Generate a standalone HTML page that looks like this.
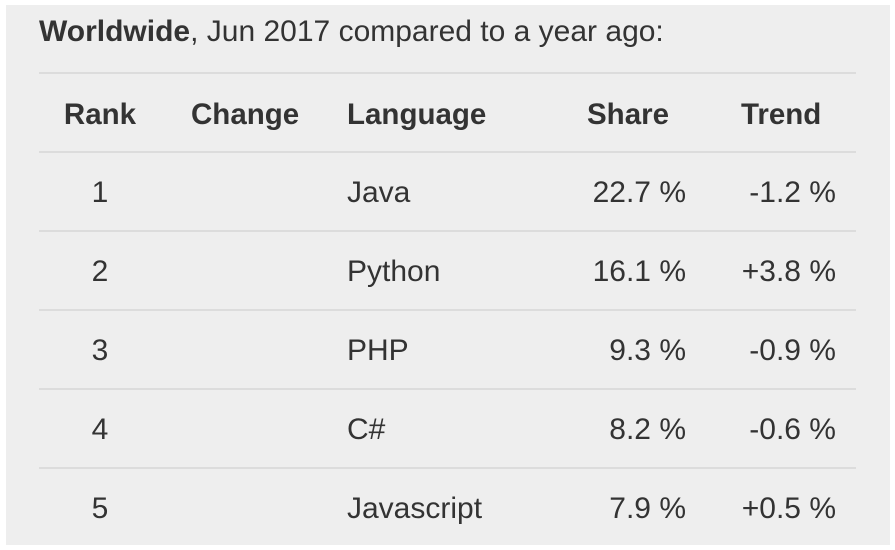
<!DOCTYPE html>
<html><head><style>
body{margin:0;width:895px;height:550px;background:#fff;position:relative;overflow:hidden;font-family:"Liberation Sans",Arial,sans-serif;color:#333}
.p{position:absolute;left:6px;top:5px;width:884px;height:540px;background:#eee}
.t{position:absolute;font-size:30px;line-height:30px;white-space:nowrap}
.h{font-weight:bold;font-size:29.5px}
.l{position:absolute;left:39px;width:817px;height:2px;background:#dcdcdc}
.c{text-align:center;width:100px;margin-left:-50px}
.r{text-align:right;width:200px;margin-left:-200px}
</style></head><body><div class="p"></div>
<div class="t" style="left:39px;top:17px"><b>Worldwide</b>, Jun 2017 compared to a year ago:</div>
<div class="l" style="top:72px"></div>
<div class="l" style="top:151px"></div>
<div class="l" style="top:230px"></div>
<div class="l" style="top:309px"></div>
<div class="l" style="top:388px"></div>
<div class="l" style="top:467px"></div>
<div class="t h c" style="left:100px;top:100px">Rank</div>
<div class="t h" style="left:191px;top:100px">Change</div>
<div class="t h" style="left:347px;top:100px">Language</div>
<div class="t h" style="left:587px;top:100px">Share</div>
<div class="t h" style="left:741px;top:100px">Trend</div>

<div class="t c" style="left:100px;top:178px">1</div><div class="t" style="left:347px;top:178px">Java</div><div class="t r" style="left:686px;top:178px">22.7 %</div><div class="t r" style="left:836px;top:178px">-1.2 %</div>
<div class="t c" style="left:100px;top:257px">2</div><div class="t" style="left:347px;top:257px">Python</div><div class="t r" style="left:686px;top:257px">16.1 %</div><div class="t r" style="left:836px;top:257px">+3.8 %</div>
<div class="t c" style="left:100px;top:336px">3</div><div class="t" style="left:347px;top:336px">PHP</div><div class="t r" style="left:686px;top:336px">9.3 %</div><div class="t r" style="left:836px;top:336px">-0.9 %</div>
<div class="t c" style="left:100px;top:415px">4</div><div class="t" style="left:347px;top:415px">C#</div><div class="t r" style="left:686px;top:415px">8.2 %</div><div class="t r" style="left:836px;top:415px">-0.6 %</div>
<div class="t c" style="left:100px;top:494px">5</div><div class="t" style="left:347px;top:494px">Javascript</div><div class="t r" style="left:686px;top:494px">7.9 %</div><div class="t r" style="left:836px;top:494px">+0.5 %</div>
</body></html>
